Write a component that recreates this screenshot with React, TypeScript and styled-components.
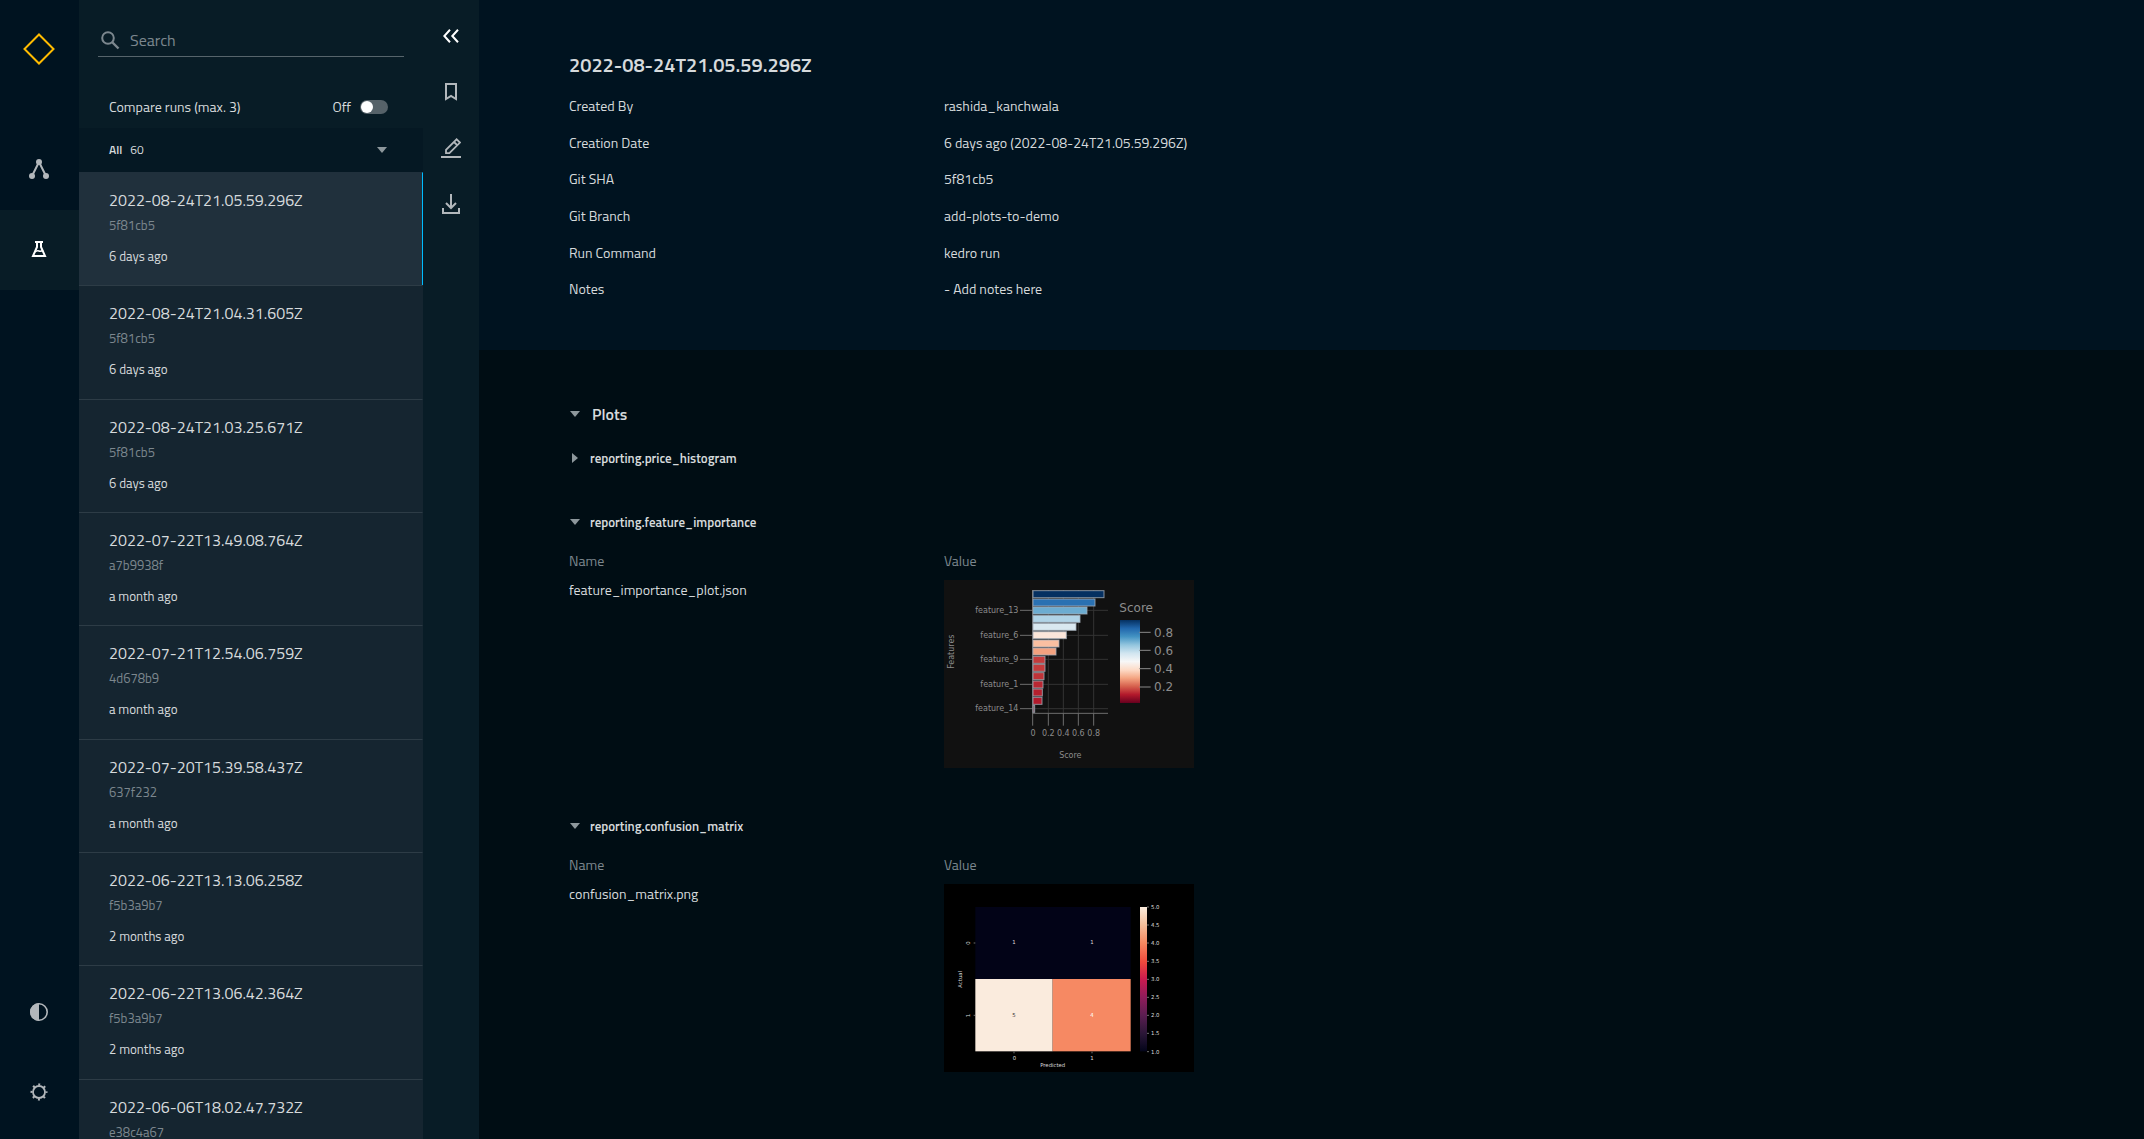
import React, { useState } from 'react';
import styled, { createGlobalStyle } from 'styled-components';

const c = {
  rail: '#001320',
  panel: '#081c26',
  group: '#051823',
  row: '#152530',
  rowActive: '#20303c',
  rule: '#2d3c46',
  body: '#000d14',
  text: '#d6dadc',
  muted: '#7c878e',
  icon: '#b2b7bb',
  accent: '#00bcff',
  brand: '#ffbc00',
};

const Global = createGlobalStyle`
  *, *::before, *::after { box-sizing: border-box; }
  body {
    margin: 0;
    background: ${c.body};
    color: ${c.text};
    font-family: 'Titillium Web', Roboto, 'Noto Sans', sans-serif;
    font-size: 14px;
    line-height: 20px;
  }
  button, input { font: inherit; color: inherit; }
  button { border: 0; padding: 0; background: none; cursor: pointer; text-align: left; }
  h1, h2, h3, ul { margin: 0; padding: 0; font: inherit; }
  ul { list-style: none; }
`;

const Shell = styled.div`
  display: flex;
  height: 100vh;
  overflow: hidden;
`;

const Rail = styled.nav`
  flex: none;
  width: 79px;
  display: flex;
  flex-direction: column;
  background: ${c.rail};
  padding-bottom: 6px;
`;

const Brand = styled.a`
  display: flex;
  justify-content: center;
  height: 130px;
  padding: 33px 1px 0 0;
`;

const RailButton = styled.button<{ $active?: boolean; $bottom?: boolean }>`
  display: flex;
  align-items: center;
  justify-content: center;
  height: 80px;
  padding: 0 1px 2px 0;
  margin-top: ${(p) => (p.$bottom ? 'auto' : '0')};
  color: ${(p) => (p.$active ? '#fff' : c.icon)};
  background: ${(p) => (p.$active ? c.panel : 'transparent')};
`;

const Sidebar = styled.aside`
  flex: none;
  display: flex;
  background: ${c.panel};
`;

const RunsColumn = styled.div`
  display: flex;
  flex-direction: column;
  width: 344px;
`;

const SearchBox = styled.label`
  display: flex;
  align-items: center;
  gap: 8px;
  height: 33px;
  margin: 24px 19px 0;
  padding-left: 2px;
  border-bottom: 1px solid #56646b;
  color: ${c.muted};
`;

const SearchInput = styled.input`
  flex: 1;
  min-width: 0;
  border: 0;
  padding: 0;
  outline: 0;
  background: none;
  font-size: 16px;
  line-height: 24px;
  &::placeholder { color: ${c.muted}; opacity: 1; }
`;

const CompareRow = styled.label`
  display: flex;
  align-items: center;
  height: 42px;
  margin-top: 29px;
  padding: 0 35px 0 30px;
`;

const SwitchState = styled.span`
  margin-left: auto;
  margin-right: 9px;
`;

const Switch = styled.input`
  appearance: none;
  display: flex;
  width: 28px;
  height: 14px;
  margin: 0;
  padding: 1px;
  border-radius: 7px;
  background: #566269;
  &::before {
    content: '';
    width: 12px;
    height: 12px;
    border-radius: 6px;
    background: #fff;
  }
  &:checked { justify-content: flex-end; background: ${c.accent}; }
`;

const GroupButton = styled.button`
  display: flex;
  align-items: center;
  gap: 8px;
  height: 44px;
  padding: 0 35px 0 30px;
  background: ${c.group};
  font-size: 12px;
  b { font-weight: 600; }
  svg { margin-left: auto; }
`;

const RunItem = styled.li<{ $active?: boolean }>`
  border-top: 1px solid ${(p) => (p.$active ? c.rowActive : c.rule)};
  border-right: 1px solid ${(p) => (p.$active ? c.accent : c.row)};
  background: ${(p) => (p.$active ? c.rowActive : c.row)};
`;

const RunButton = styled.button`
  display: flex;
  flex-direction: column;
  width: 100%;
  height: 100%;
  padding: 15px 30px 0;
`;

const RunName = styled.span`
  font-size: 16px;
  line-height: 24px;
`;

const RunSha = styled.span`
  margin-bottom: 10px;
  color: ${c.muted};
  font-size: 13px;
  line-height: 26px;
`;

const RunAge = styled.span`
  font-size: 13px;
  line-height: 16px;
`;

const RunScroller = styled.div`
  flex: 1;
  min-height: 0;
  overflow: hidden;
`;

const RunList = styled.ul`
  display: grid;
  grid-auto-rows: 1fr;
  min-height: 1020px;
`;

const Tools = styled.div`
  display: flex;
  flex-direction: column;
  width: 56px;
  padding-top: 8px;
`;

const ToolButton = styled.button<{ $bright?: boolean }>`
  display: flex;
  align-items: center;
  justify-content: center;
  height: 56px;
  color: ${(p) => (p.$bright ? '#fff' : c.icon)};
`;

const Main = styled.main`
  flex: 1;
  min-width: 0;
  overflow: hidden;
`;

const Details = styled.section`
  padding: 50px 90px 43px;
  background: ${c.rail};
`;

const Title = styled.h1`
  margin-bottom: 7px;
  font-size: 20px;
  font-weight: 600;
  line-height: 30px;
`;

const DataTable = styled.table`
  width: 100%;
  border-collapse: collapse;
  table-layout: fixed;
  th, td { padding: 0; text-align: left; font-weight: 400; vertical-align: top; }
  th:first-child, td:first-child { width: 375px; }
`;

const DetailTable = styled(DataTable)`
  height: 220px;
  th, td { padding-top: 9px; }
`;

const Datasets = styled.section`
  padding: 52px 90px 0;
`;

const SectionToggle = styled.button<{ $large?: boolean }>`
  display: flex;
  align-items: center;
  gap: ${(p) => (p.$large ? '11px' : '9px')};
  height: 24px;
  font-size: ${(p) => (p.$large ? '16px' : '13px')};
  font-weight: 600;
`;

const Dataset = styled.div<{ $open: boolean }>`
  margin-top: 20px;
  padding-bottom: ${(p) => (p.$open ? '26px' : '20px')};
`;

const DatasetTable = styled(DataTable)`
  margin-top: 17px;
  th { height: 29px; color: ${c.muted}; }
`;

const PlotButton = styled.button`
  display: block;
  svg { display: block; }
`;

const Caret = ({ open = true }: { open?: boolean }) => (
  <svg width="12" height="12" viewBox="0 0 12 12" fill="#8d979c" aria-hidden="true">
    {open ? <path d="M1 3h10L6 9z" /> : <path d="M3 1v10l6-5z" />}
  </svg>
);

const bars: [number, string][] = [
  [524, '#053061'], [497, '#2a71b2'], [473, '#6cacd1'], [452, '#b0d3e6'],
  [440, '#d9e8f0'], [411, '#fbe6da'], [389, '#f9bfa1'], [380, '#f2a17f'],
  [347, '#c43b3c'], [347, '#c43b3c'], [344, '#bf3338'], [341, '#b92732'],
  [339, '#b5202e'], [338, '#b31a2c'], [316, '#7a4a55'],
];
const featureTicks: [number, string][] = [
  [121, 'feature_13'], [196, 'feature_6'], [268, 'feature_9'], [343, 'feature_1'], [416, 'feature_14'],
];
const scoreTicks: [number, string][] = [
  [309, '0'], [355, '0.2'], [400, '0.4'], [445, '0.6'], [491, '0.8'],
];
const scaleTicks: [number, string][] = [[187, '0.8'], [241, '0.6'], [296, '0.4'], [351, '0.2']];

const FeatureChart = () => (
  <svg width="250" height="188" viewBox="42 30 750 564" role="img" aria-label="Feature importance"
    fontFamily="'DejaVu Sans', sans-serif" fontSize="24" fill="#8c8c8c">
    <defs>
      <linearGradient id="rdbu" x1="0" y1="0" x2="0" y2="1">
        <stop offset="0" stopColor="#053061" />
        <stop offset=".1" stopColor="#2166ac" />
        <stop offset=".2" stopColor="#4393c3" />
        <stop offset=".3" stopColor="#92c5de" />
        <stop offset=".4" stopColor="#d1e5f0" />
        <stop offset=".5" stopColor="#f7f7f7" />
        <stop offset=".6" stopColor="#fddbc7" />
        <stop offset=".7" stopColor="#f4a582" />
        <stop offset=".8" stopColor="#d6604d" />
        <stop offset=".9" stopColor="#b2182b" />
        <stop offset="1" stopColor="#67001f" />
      </linearGradient>
    </defs>
    <rect x="42" y="30" width="750" height="564" fill="#111111" />
    <g stroke="#343434" strokeWidth="3">
      {scoreTicks.slice(1).map(([x]) => <path key={x} d={`M${x} 60V430`} />)}
      {featureTicks.map(([y]) => <path key={y} d={`M308 ${y}H534`} />)}
    </g>
    <g stroke="#6e6e6e" strokeWidth="3" fill="none">
      <path d="M308 60V467M307 430H534" />
      {scoreTicks.slice(1).map(([x]) => <path key={x} d={`M${x} 430V467`} />)}
      {featureTicks.map(([y]) => <path key={y} d={`M270 ${y}H308`} />)}
    </g>
    {bars.map(([end, color], i) => (
      <rect key={i} x="309" y={62 + Math.round(i * 24.6)} width={end - 311} height="21"
        fill={color} stroke="#a3adb8" strokeOpacity=".8" strokeWidth="3" />
    ))}
    {featureTicks.map(([y, t]) => <text key={t} x="265" y={y + 8} textAnchor="end">{t}</text>)}
    {scoreTicks.map(([x, t]) => <text key={t} x={x} y="498" textAnchor="middle">{t}</text>)}
    <text x="421" y="563" textAnchor="middle">Score</text>
    <text transform="translate(72 245) rotate(-90)" textAnchor="middle">Features</text>
    <g fontSize="36">
      <text x="568" y="126">Score</text>
      {scaleTicks.map(([y, t]) => <text key={t} x="672" y={y + 13}>{t}</text>)}
    </g>
    <rect x="570" y="150" width="60" height="249" fill="url(#rdbu)" />
    <g stroke="#8a8a8a" strokeWidth="3">
      {scaleTicks.map(([y]) => <path key={y} d={`M628 ${y}H662`} />)}
    </g>
  </svg>
);

const matrixTicks = ['5.0', '4.5', '4.0', '3.5', '3.0', '2.5', '2.0', '1.5', '1.0'];

const MatrixChart = () => (
  <svg width="250" height="188" viewBox="42 42 750 564" role="img" aria-label="Confusion matrix"
    fontFamily="'DejaVu Sans', sans-serif" fontSize="16" fill="#dcdcdc" textAnchor="middle">
    <defs>
      <linearGradient id="rocket" x1="0" y1="0" x2="0" y2="1">
        <stop offset="0" stopColor="#faebdd" />
        <stop offset=".12" stopColor="#f6c09c" />
        <stop offset=".25" stopColor="#f58860" />
        <stop offset=".38" stopColor="#ee4a3d" />
        <stop offset=".5" stopColor="#cb1b4f" />
        <stop offset=".62" stopColor="#921c5b" />
        <stop offset=".75" stopColor="#5b1e51" />
        <stop offset=".88" stopColor="#2a1636" />
        <stop offset="1" stopColor="#03051a" />
      </linearGradient>
    </defs>
    <rect x="42" y="42" width="750" height="564" fill="#000" />
    <rect x="136" y="111" width="466" height="216" fill="#020317" />
    <rect x="136" y="327" width="232" height="217" fill="#faebdd" />
    <rect x="368" y="327" width="234" height="217" fill="#f68963" />
    <rect x="630" y="111" width="21" height="433" fill="url(#rocket)" />
    <g stroke="#a8a8a8" strokeWidth="2">
      <path d="M131 219H136M131 436H136M252 545V550M486 545V550" />
      {matrixTicks.map((t, i) => <path key={t} d={`M651 ${111 + Math.round(i * 54.2)}h6`} />)}
    </g>
    <text x="252" y="223">1</text>
    <text x="486" y="223">1</text>
    <text x="252" y="440" fill="#3a3636">5</text>
    <text x="486" y="440" fill="#fff">4</text>
    <text x="253" y="569">0</text>
    <text x="486" y="569">1</text>
    <text x="368" y="591">Predicted</text>
    <text transform="translate(121 219) rotate(-90)">0</text>
    <text transform="translate(121 437) rotate(-90)">1</text>
    <text transform="translate(97 328) rotate(-90)">Actual</text>
    <g textAnchor="start">
      {matrixTicks.map((t, i) => <text key={t} x="663" y={117 + Math.round(i * 54.2)}>{t}</text>)}
    </g>
  </svg>
);

const runs = [
  ['2022-08-24T21.05.59.296Z', '5f81cb5', '6 days ago'],
  ['2022-08-24T21.04.31.605Z', '5f81cb5', '6 days ago'],
  ['2022-08-24T21.03.25.671Z', '5f81cb5', '6 days ago'],
  ['2022-07-22T13.49.08.764Z', 'a7b9938f', 'a month ago'],
  ['2022-07-21T12.54.06.759Z', '4d678b9', 'a month ago'],
  ['2022-07-20T15.39.58.437Z', '637f232', 'a month ago'],
  ['2022-06-22T13.13.06.258Z', 'f5b3a9b7', '2 months ago'],
  ['2022-06-22T13.06.42.364Z', 'f5b3a9b7', '2 months ago'],
  ['2022-06-06T18.02.47.732Z', 'e38c4a67', '2 months ago'],
];

const details = [
  ['Created By', 'rashida_kanchwala'],
  ['Creation Date', '6 days ago (2022-08-24T21.05.59.296Z)'],
  ['Git SHA', '5f81cb5'],
  ['Git Branch', 'add-plots-to-demo'],
  ['Run Command', 'kedro run'],
  ['Notes', '- Add notes here'],
];

const datasets = [
  { name: 'reporting.price_histogram', file: '', chart: null, open: false },
  { name: 'reporting.feature_importance', file: 'feature_importance_plot.json', chart: <FeatureChart />, open: true },
  { name: 'reporting.confusion_matrix', file: 'confusion_matrix.png', chart: <MatrixChart />, open: true },
];

export default function App() {
  const [compare, setCompare] = useState(false);
  const [query, setQuery] = useState('');

  return (
    <>
      <Global />
      <Shell>
        <Rail aria-label="Main">
          <Brand href="#" aria-label="Home">
            <svg width="32" height="32" viewBox="0 0 32 32" fill="none" stroke={c.brand} strokeWidth="2">
              <path d="M16 1.5 30.5 16 16 30.5 1.5 16z" />
            </svg>
          </Brand>
          <RailButton aria-label="Flowchart">
            <svg width="20" height="20" viewBox="0 0 20 20" fill="currentColor">
              <path d="M10 3 3 17M10 3l7 14" stroke="currentColor" strokeWidth="2" />
              <circle cx="10" cy="3" r="3" />
              <circle cx="3" cy="17" r="3" />
              <circle cx="17" cy="17" r="3" />
            </svg>
          </RailButton>
          <RailButton $active aria-label="Experiment tracking">
            <svg width="16" height="16" viewBox="0 0 16 16" fill="none" stroke="currentColor" strokeWidth="2">
              <path d="M4 1h8" />
              <path d="M6 1v5L2 15h12l-4-9V1" />
              <path d="M4 11q2-2 4-1t4-1" strokeWidth="1.5" />
            </svg>
          </RailButton>
          <RailButton $bottom aria-label="Change theme">
            <svg width="18" height="18" viewBox="0 0 18 18">
              <circle cx="9" cy="9" r="8.2" fill="none" stroke="currentColor" strokeWidth="1.6" />
              <path d="M9 0a9 9 0 0 0 0 18z" fill="currentColor" />
            </svg>
          </RailButton>
          <RailButton aria-label="Settings">
            <svg width="18" height="18" viewBox="0 0 18 18" fill="none" stroke="currentColor">
              <circle cx="9" cy="9" r="6" strokeWidth="1.8" />
              <circle cx="9" cy="9" r="7.5" strokeWidth="2" strokeDasharray="2 3.89" strokeDashoffset="1" />
            </svg>
          </RailButton>
        </Rail>

        <Sidebar>
          <RunsColumn>
            <SearchBox>
              <svg width="22" height="22" viewBox="0 0 22 22" fill="none" stroke="currentColor" strokeWidth="2">
                <circle cx="8" cy="9" r="5.8" />
                <path d="m12 13 6.500 6.500" strokeWidth="2.4" />
              </svg>
              <SearchInput placeholder="Search" aria-label="Search" value={query}
                onChange={(e) => setQuery(e.target.value)} />
            </SearchBox>
            <CompareRow>
              <span>Compare runs (max. 3)</span>
              <SwitchState>{compare ? 'On' : 'Off'}</SwitchState>
              <Switch type="checkbox" checked={compare} onChange={(e) => setCompare(e.target.checked)} />
            </CompareRow>
            <GroupButton aria-expanded>
              <b>All</b>
              <span>60</span>
              <Caret />
            </GroupButton>
            <RunScroller>
              <RunList>
                {runs.map(([name, sha, age], i) => (
                  <RunItem key={name} $active={i === 0}>
                    <RunButton>
                      <RunName>{name}</RunName>
                      <RunSha>{sha}</RunSha>
                      <RunAge>{age}</RunAge>
                    </RunButton>
                  </RunItem>
                ))}
              </RunList>
            </RunScroller>
          </RunsColumn>
          <Tools>
            <ToolButton $bright aria-label="Hide sidebar">
              <svg width="16" height="14" viewBox="0 0 16 14" fill="none" stroke="currentColor" strokeWidth="2">
                <path d="M7 .8 1.3 7 7 13.200M15 .8 9.300 7l5.700 6.200" />
              </svg>
            </ToolButton>
            <ToolButton aria-label="Bookmark">
              <svg width="12" height="18" viewBox="0 0 12 18" fill="none" stroke="currentColor" strokeWidth="2">
                <path d="M1 1h10v15l-5-3-5 3z" />
              </svg>
            </ToolButton>
            <ToolButton aria-label="Edit">
              <svg width="20" height="20" viewBox="0 0 20 20" fill="none" stroke="currentColor" strokeWidth="1.8">
                <path d="M5 15.200v-3.400L15.600 1.300 19 4.600 8.400 15.200zM13 4l3.200 3.200" />
                <path d="M0 19h20" strokeWidth="2" />
              </svg>
            </ToolButton>
            <ToolButton aria-label="Export">
              <svg width="18" height="20" viewBox="0 0 18 20" fill="none" stroke="currentColor" strokeWidth="2">
                <path d="M9 0v14M4 9l5 5 5-5M1 14v5h16v-5" />
              </svg>
            </ToolButton>
          </Tools>
        </Sidebar>

        <Main>
          <Details>
            <Title>{runs[0][0]}</Title>
            <DetailTable>
              <tbody>
                {details.map(([label, value]) => (
                  <tr key={label}>
                    <th scope="row">{label}</th>
                    <td>{value}</td>
                  </tr>
                ))}
              </tbody>
            </DetailTable>
          </Details>
          <Datasets>
            <SectionToggle $large aria-expanded>
              <Caret />
              Plots
            </SectionToggle>
            {datasets.map((d) => (
              <Dataset key={d.name} $open={d.open}>
                <SectionToggle aria-expanded={d.open}>
                  <Caret open={d.open} />
                  {d.name}
                </SectionToggle>
                {d.open && (
                  <DatasetTable>
                    <thead>
                      <tr><th scope="col">Name</th><th scope="col">Value</th></tr>
                    </thead>
                    <tbody>
                      <tr>
                        <td>{d.file}</td>
                        <td><PlotButton aria-label={`Expand ${d.name}`}>{d.chart}</PlotButton></td>
                      </tr>
                    </tbody>
                  </DatasetTable>
                )}
              </Dataset>
            ))}
          </Datasets>
        </Main>
      </Shell>
    </>
  );
}
